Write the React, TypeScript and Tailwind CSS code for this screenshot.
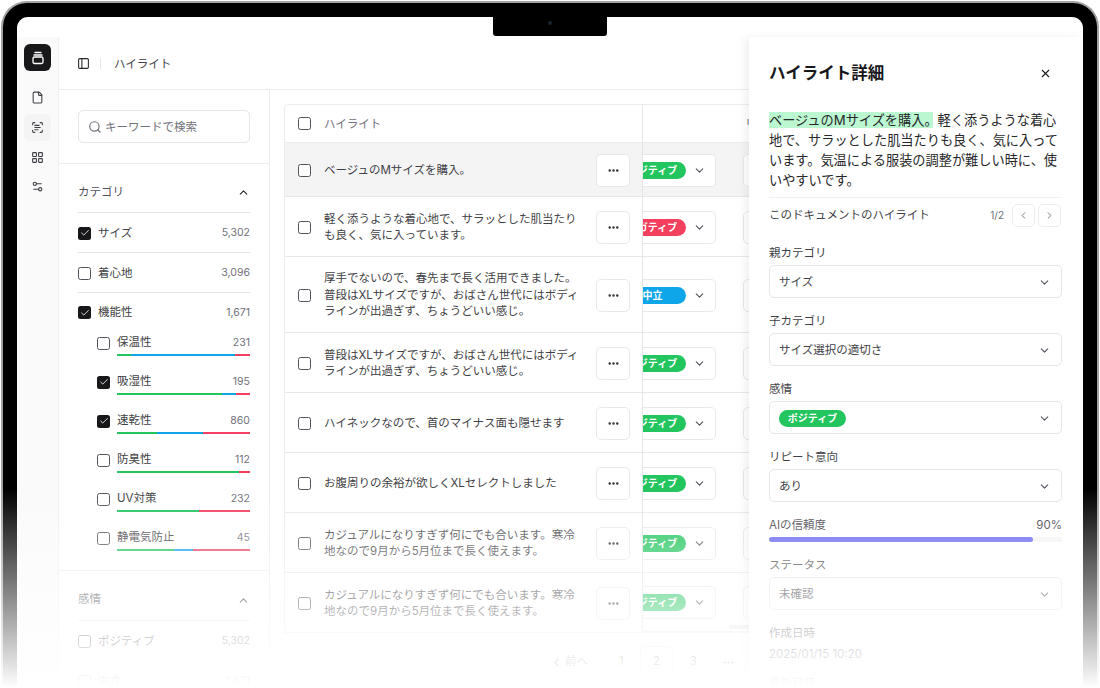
import {
  Check,
  ChevronDown,
  ChevronLeft,
  ChevronRight,
  ChevronUp,
  Ellipsis,
  File,
  LayoutGrid,
  PanelLeft,
  ScanText,
  Search,
  Settings2,
  X,
} from "lucide-react";

const font = { fontFamily: 'Inter, "Noto Sans CJK JP", sans-serif' };

type Sentiment = "pos" | "neg" | "neu";

const rows: { h: string; text: string[]; s: Sentiment; active?: boolean }[] = [
  { h: "h-[54px]", text: ["ベージュのMサイズを購入。"], s: "pos", active: true },
  { h: "h-[60px]", text: ["軽く添うような着心地で、サラッとした肌当たり", "も良く、気に入っています。"], s: "neg" },
  {
    h: "h-[76px]",
    text: [
      "厚手でないので、春先まで長く活用できました。",
      "普段はXLサイズですが、おばさん世代にはボディ",
      "ラインが出過ぎず、ちょうどいい感じ。",
    ],
    s: "neu",
  },
  { h: "h-[60px]", text: ["普段はXLサイズですが、おばさん世代にはボディ", "ラインが出過ぎず、ちょうどいい感じ。"], s: "pos" },
  { h: "h-[60px]", text: ["ハイネックなので、首のマイナス面も隠せます"], s: "pos" },
  { h: "h-[60px]", text: ["お腹周りの余裕が欲しくXLセレクトしました"], s: "pos" },
  { h: "h-[60px]", text: ["カジュアルになりすぎず何にでも合います。寒冷", "地なので9月から5月位まで長く使えます。"], s: "pos" },
  { h: "h-[59px]", text: ["カジュアルになりすぎず何にでも合います。寒冷", "地なので9月から5月位まで長く使えます。"], s: "pos" },
];

const subFilters = [
  { name: "保温性", count: "231", on: false, bar: [10.5, 78.5, 11] },
  { name: "吸湿性", count: "195", on: true, bar: [79, 10.5, 10.5] },
  { name: "速乾性", count: "860", on: true, bar: [30, 35, 35] },
  { name: "防臭性", count: "112", on: false, bar: [92, 0, 8] },
  { name: "UV対策", count: "232", on: false, bar: [61.5, 0, 38.5] },
  { name: "静電気防止", count: "45", on: false, bar: [43, 14.5, 42.5] },
];

function Box({ on = false }: { on?: boolean }) {
  return on ? (
    <span className="flex h-[13px] w-[13px] shrink-0 items-center justify-center rounded-[2.5px] bg-[#18181b] text-white">
      <Check size={10} strokeWidth={2} />
    </span>
  ) : (
    <span className="block h-[13px] w-[13px] shrink-0 rounded-[2.5px] border border-[#52525b] bg-white" />
  );
}

function Pill({ s, className = "" }: { s: Sentiment; className?: string }) {
  const color = s === "pos" ? "bg-[#22c55e]" : s === "neg" ? "bg-[#f43f5e]" : "bg-[#0ea5e9]";
  const label = s === "pos" ? "ポジティブ" : s === "neg" ? "ネガティブ" : "中立";
  return (
    <span
      className={`inline-flex h-[17px] w-[67px] shrink-0 items-center justify-center rounded-full text-[10px] font-bold text-white ${color} ${className}`}
    >
      {label}
    </span>
  );
}

function FilterRow({ label, count, on = false }: { label: string; count: string; on?: boolean }) {
  return (
    <div className="flex h-[40px] items-center border-b border-[#e5e5e5] pt-px text-[11.5px]">
      <Box on={on} />
      <span className="ml-[7px] flex-1 pt-px text-[#3f3f46]">{label}</span>
      <span className="text-[10.5px] text-[#71717a]">{count}</span>
    </div>
  );
}

function Field({ label, value }: { label: string; value: React.ReactNode }) {
  return (
    <div className="mt-[14px]">
      <div className="h-[16px] text-[11.5px] leading-[18px] text-[#3f3f46]">{label}</div>
      <div className="mt-[5px] flex h-[33px] items-center justify-between rounded-[5px] border border-[#e5e5e5] bg-white pl-[9px] pr-[10px] pt-[2px] text-[11.5px] text-[#3f3f46]">
        {value}
        <ChevronDown size={13} className="text-[#52525b]" />
      </div>
    </div>
  );
}

export default function App() {
  return (
    <div style={font} className="relative h-[688px] w-[1100px] overflow-hidden bg-white text-[#27272a]">
      {/* Laptop frame */}
      <div className="mx-px mt-px h-[720px] rounded-t-[26px] border-[2px] border-b-0 border-[#a3a3a3] bg-black px-[14px] pt-[14px]">
        <div className="relative flex h-full flex-col overflow-hidden rounded-t-[11px] bg-white">
          <div className="h-[20px] shrink-0" />
          <div className="flex min-h-0 flex-1">
            {/* Icon rail */}
            <aside className="flex w-[42px] shrink-0 flex-col items-center border-r border-[#f0f0f0] bg-[#fafafa] pt-[7px]">
              <div className="flex h-[27px] w-[27px] items-center justify-center rounded-[6px] bg-[#18181b] text-white">
                <svg width="14" height="14" viewBox="0 0 14 14" fill="none" stroke="currentColor" strokeWidth="1.3">
                  <path d="M4 1.5h6M3 4h8" strokeLinecap="round" />
                  <rect x="2" y="6" width="10" height="6.5" rx="1.4" />
                </svg>
              </div>
              <div className="mt-[13px] flex h-[27px] w-[27px] items-center justify-center text-[#3f3f46]">
                <File size={13} />
              </div>
              <div className="mt-[3px] flex h-[27px] w-[27px] items-center justify-center rounded-[6px] bg-[#f4f4f5] text-[#3f3f46]">
                <ScanText size={13} />
              </div>
              <div className="mt-[3px] flex h-[27px] w-[27px] items-center justify-center text-[#3f3f46]">
                <LayoutGrid size={13} />
              </div>
              <div className="mt-[2px] flex h-[27px] w-[27px] items-center justify-center text-[#3f3f46]">
                <Settings2 size={13} />
              </div>
            </aside>

            <div className="flex min-w-0 flex-1 flex-col">
              <header className="flex h-[53px] shrink-0 items-center border-b border-[#ececec] pl-[18px] pt-px">
                <PanelLeft size={13} className="text-[#27272a]" />
                <span className="ml-[10px] h-[11px] w-px bg-[#e5e5e5]" />
                <span className="ml-[13px] pt-[2px] text-[11.5px] text-[#3f3f46]">ハイライト</span>
              </header>

              <div className="flex min-h-0 flex-1">
                {/* Filters */}
                <section className="w-[211px] shrink-0 border-r border-[#ececec]">
                  <div className="h-[74px] border-b border-[#ececec] px-[19px] pt-[20px]">
                    <div className="flex h-[33px] w-[172px] items-center rounded-[5px] border border-[#e5e5e5] pl-[9px] text-[11.5px] text-[#71717a]">
                      <Search size={14} />
                      <span className="ml-[3px] pt-[2px]">キーワードで検索</span>
                    </div>
                  </div>
                  <div className="border-b border-[#ececec] px-[19px] pb-[5px]">
                    <div className="flex h-[49px] items-center justify-between border-b border-[#e5e5e5] pt-[9px] text-[11.5px] text-[#52525b]">
                      カテゴリ
                      <ChevronUp size={13} className="text-[#27272a]" />
                    </div>
                    <FilterRow label="サイズ" count="5,302" on />
                    <FilterRow label="着心地" count="3,096" />
                    <div className="flex h-[38px] items-center pt-px text-[11.5px]">
                      <Box on />
                      <span className="ml-[7px] flex-1 text-[#3f3f46]">機能性</span>
                      <span className="text-[10.5px] text-[#71717a]">1,671</span>
                    </div>
                    {subFilters.map((f) => (
                      <div key={f.name} className="flex h-[39px] items-start pl-[19px] pt-[4px]">
                        <div className="shrink-0 pt-[1.5px]">
                          <Box on={f.on} />
                        </div>
                        <div className="ml-[7px] flex-1">
                          <div className="flex h-[16px] items-center justify-between text-[11.5px] text-[#3f3f46]">
                            {f.name}
                            <span className="text-[10.5px] text-[#71717a]">{f.count}</span>
                          </div>
                          <div className="mt-[3px] flex h-[2px]">
                            <span className="bg-[#22c55e]" style={{ width: `${f.bar[0]}%` }} />
                            <span className="bg-[#0ea5e9]" style={{ width: `${f.bar[1]}%` }} />
                            <span className="bg-[#f43f5e]" style={{ width: `${f.bar[2]}%` }} />
                          </div>
                        </div>
                      </div>
                    ))}
                  </div>
                  <div className="px-[19px]">
                    <div className="flex h-[50px] items-center justify-between border-b border-[#e5e5e5] pt-[9px] text-[11.5px] text-[#52525b]">
                      感情
                      <ChevronUp size={13} className="text-[#27272a]" />
                    </div>
                    <FilterRow label="ポジティブ" count="5,302" />
                    <FilterRow label="中立" count="1,671" />
                  </div>
                </section>

                {/* Table */}
                <section className="min-w-0 flex-1 pl-[14px] pt-[14px]">
                  <div className="flex h-[529px] overflow-hidden rounded-tl-[5px] border border-r-0 border-[#ececec]">
                    <div className="w-[358px] shrink-0 border-r border-[#e5e5e5]">
                      <div className="flex h-[38px] items-center border-b border-[#ececec] pl-[13px] text-[11.5px] text-[#71717a]">
                        <Box />
                        <span className="ml-[13px] pt-[2px]">ハイライト</span>
                      </div>
                      {rows.map((r, i) => (
                        <div
                          key={i}
                          className={`flex items-center border-b border-[#e8e8e8] pl-[13px] pt-px last:border-b-0 ${r.h} ${
                            r.active ? "bg-[#f4f4f4]" : ""
                          }`}
                        >
                          <Box />
                          <div className="ml-[13px] flex-1 text-[11.5px] leading-[16.5px] text-[#3f3f46]">
                            {r.text.map((t) => (
                              <div key={t}>{t}</div>
                            ))}
                          </div>
                          <div className="mr-[12px] flex h-[33px] w-[34px] items-center justify-center rounded-[5px] border border-[#e8e8e8] bg-white">
                            <Ellipsis size={13} strokeWidth={2.5} />
                          </div>
                        </div>
                      ))}
                    </div>
                    <div className="relative min-w-0 flex-1 overflow-hidden">
                      <div className="flex h-[38px] items-center border-b border-[#ececec] pl-[102px] pt-[2px] text-[11.5px] text-[#71717a]">
                        リピート
                      </div>
                      {rows.map((r, i) => (
                        <div
                          key={i}
                          className={`flex items-center border-b border-[#e8e8e8] pt-px last:border-b-0 ${r.h} ${
                            r.active ? "bg-[#f4f4f4]" : ""
                          }`}
                        >
                          <div className="ml-[-34px] flex h-[33px] w-[107px] shrink-0 items-center rounded-[5px] border border-[#e8e8e8] bg-white pl-[9px]">
                            <Pill s={r.s} />
                            <ChevronDown size={13} className="ml-[7px] text-[#52525b]" />
                          </div>
                          <div className="ml-[27px] h-[33px] w-[100px] shrink-0 rounded-[5px] border border-[#e8e8e8] bg-white" />
                        </div>
                      ))}
                      <div className="absolute bottom-[3px] left-[86px] h-[4px] w-[200px] rounded-full bg-[#e5e5e5]" />
                    </div>
                  </div>
                  <div className="flex items-center pl-[266px] pt-[13px] text-[11.5px] text-[#71717a]">
                    <ChevronLeft size={13} />
                    <span className="ml-[2px]">前へ</span>
                    <span className="ml-[31px]">1</span>
                    <span className="ml-[16px] flex h-[32px] w-[33px] items-center justify-center rounded-[5px] border border-[#e5e5e5]">
                      2
                    </span>
                    <span className="ml-[17px]">3</span>
                    <Ellipsis size={13} className="ml-[25px]" />
                  </div>
                </section>
              </div>
            </div>
          </div>

          {/* Notch */}
          <div className="absolute left-[476px] top-0 flex h-[19px] w-[114px] justify-center rounded-b-[3px] bg-black pt-[4px]">
            <span className="h-[4px] w-[4px] rounded-full bg-[#1c2333]" />
          </div>

          {/* Detail drawer */}
          <aside className="absolute bottom-0 right-0 top-[20px] w-[334px] bg-white pl-[20px] pr-[21px] shadow-[-4px_0_8px_rgba(0,0,0,0.06)]">
            <div className="flex h-[73px] items-center justify-between pr-[10px]">
              <h2 className="text-[16.5px] font-bold text-[#18181b]">ハイライト詳細</h2>
              <X size={13} className="text-[#18181b]" />
            </div>
            <p className="text-[13.2px] leading-[20px] text-[#27272a]">
              <mark className="bg-[#bbf7d0] text-[#27272a]">
                ベージュのMサイズを購入<span className="mr-[-5px]">。</span>
              </mark>
              <span className="ml-[5px]">
                軽く添うような着心地で、サラッとした肌当たりも良く、気に入っています。気温による服装の調整が難しい時に、使いやすいです。
              </span>
            </p>
            <div className="mb-[-2px] mt-[7px] flex h-[35px] items-center justify-between border-t border-[#f0f0f0] text-[11.5px] text-[#3f3f46]">
              <span className="pt-[2px]">このドキュメントのハイライト</span>
              <div className="mr-px flex items-center text-[#71717a]">
                <span className="mr-[8px] text-[10px]">1/2</span>
                <span className="flex h-[23px] w-[23px] items-center justify-center rounded-[5px] border border-[#ececec]">
                  <ChevronLeft size={11} />
                </span>
                <span className="ml-[3px] flex h-[23px] w-[23px] items-center justify-center rounded-[5px] border border-[#ececec]">
                  <ChevronRight size={11} />
                </span>
              </div>
            </div>
            <Field label="親カテゴリ" value="サイズ" />
            <Field label="子カテゴリ" value="サイズ選択の適切さ" />
            <Field label="感情" value={<Pill s="pos" />} />
            <Field label="リピート意向" value="あり" />
            <div className="mt-[15px] flex h-[16px] items-center justify-between pt-[2px] text-[11.5px] text-[#3f3f46]">
              AIの信頼度
              <span>90%</span>
            </div>
            <div className="mt-[4px] h-[5px] rounded-full bg-[#f4f4f5]">
              <div className="h-full w-[90%] rounded-full bg-[#6366f1]" />
            </div>
            <Field label="ステータス" value="未確認" />
            <div className="mt-[15px] h-[16px] text-[11.5px] leading-[16px] text-[#52525b]">作成日時</div>
            <div className="mt-[5px] text-[11.5px] leading-[16px] text-[#52525b]">2025/01/15 10:20</div>
            <div className="mt-[13px] h-[16px] text-[11.5px] leading-[16px] text-[#52525b]">更新日時</div>
          </aside>
        </div>
      </div>

      {/* Bottom fade over the laptop */}
      <div className="pointer-events-none absolute bottom-0 left-0 h-[200px] w-full bg-gradient-to-b from-white/0 to-white" />
    </div>
  );
}
